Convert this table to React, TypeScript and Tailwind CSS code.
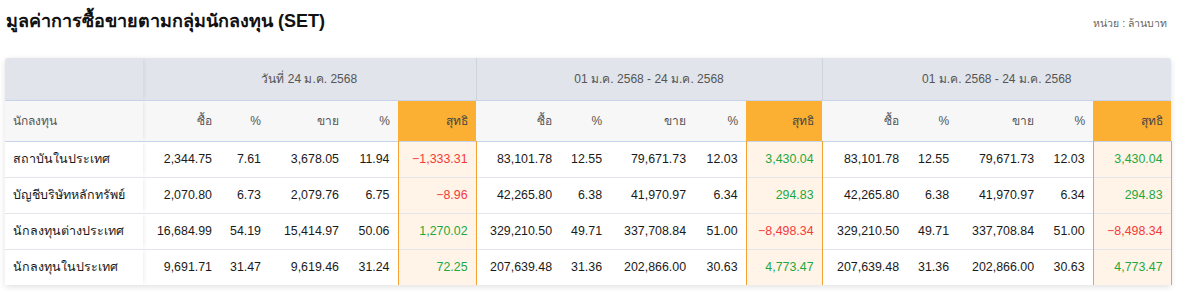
import React from "react";

type Row = {
  name: string;
  d: [string, string, string, string, string];
  m: [string, string, string, string, string];
  y: [string, string, string, string, string];
};

const rows: Row[] = [
  {
    name: "สถาบันในประเทศ",
    d: ["2,344.75", "7.61", "3,678.05", "11.94", "-1,333.31"],
    m: ["83,101.78", "12.55", "79,671.73", "12.03", "3,430.04"],
    y: ["83,101.78", "12.55", "79,671.73", "12.03", "3,430.04"],
  },
  {
    name: "บัญชีบริษัทหลักทรัพย์",
    d: ["2,070.80", "6.73", "2,079.76", "6.75", "-8.96"],
    m: ["42,265.80", "6.38", "41,970.97", "6.34", "294.83"],
    y: ["42,265.80", "6.38", "41,970.97", "6.34", "294.83"],
  },
  {
    name: "นักลงทุนต่างประเทศ",
    d: ["16,684.99", "54.19", "15,414.97", "50.06", "1,270.02"],
    m: ["329,210.50", "49.71", "337,708.84", "51.00", "-8,498.34"],
    y: ["329,210.50", "49.71", "337,708.84", "51.00", "-8,498.34"],
  },
  {
    name: "นักลงทุนในประเทศ",
    d: ["9,691.71", "31.47", "9,619.46", "31.24", "72.25"],
    m: ["207,639.48", "31.36", "202,866.00", "30.63", "4,773.47"],
    y: ["207,639.48", "31.36", "202,866.00", "30.63", "4,773.47"],
  },
];

const groups = [
  { label: "วันที่ 24 ม.ค. 2568", key: "d" as const, widths: ["w-[77px]", "w-[49px]", "w-[78px]", "w-[51px]", "w-[78px]"] },
  { label: "01 ม.ค. 2568 - 24 ม.ค. 2568", key: "m" as const, widths: ["w-[84px]", "w-[50px]", "w-[84px]", "w-[52px]", "w-[76px]"] },
  { label: "01 ม.ค. 2568 - 24 ม.ค. 2568", key: "y" as const, widths: ["w-[85px]", "w-[50px]", "w-[85px]", "w-[51px]", "w-[78px]"] },
];

const subHeads = ["ซื้อ", "%", "ขาย", "%"];

function NetCell({ value }: { value: string }) {
  const neg = value.startsWith("-");
  return (
    <td
      className={`border-x border-[#f5a132] bg-[#fff4e7] px-2 text-right ${
        neg ? "text-[#f23a3a]" : "text-[#1fa83f]"
      }`}
    >
      {neg ? "\u2212" + value.slice(1) : value}
    </td>
  );
}

export default function App() {
  return (
    <div
      className="min-h-screen bg-white px-[5px] pt-[9px]"
      style={{ fontFamily: '"Liberation Sans", "Noto Sans", sans-serif' }}
    >
      <div className="flex items-end justify-between pr-[5px]">
        <h1 className="text-[18px] font-bold text-[#111] leading-[24px] pl-[1px]">
          มูลค่าการซื้อขายตามกลุ่มนักลงทุน (SET)
        </h1>
        <span className="text-[10.5px] text-[#666] mb-[1px]">หน่วย : ล้านบาท</span>
      </div>

      <div className="mt-[25px] w-[1166px] rounded-t-[3px] shadow-[0_2px_6px_rgba(0,0,0,0.12)]">
        <table className="w-full table-fixed border-collapse text-[12.4px]">
          <colgroup>
            <col className="w-[138px]" />
            {groups.map((g) =>
              g.widths.map((w, i) => <col key={g.key + i} className={w} />)
            )}
          </colgroup>
          <thead className="text-[12px]">
            <tr className="h-[42px] bg-[#e1e4ea] text-[#555]">
              <th className="shadow-[3px_0_4px_-2px_rgba(0,0,0,0.08)] rounded-tl-[3px]"></th>
              {groups.map((g, i) => (
                <th
                  key={g.key}
                  colSpan={5}
                  className={`font-normal text-center ${
                    i > 0 ? "border-l border-[#cfd4dc]" : ""
                  } ${i === 2 ? "rounded-tr-[3px]" : ""}`}
                >
                  {g.label}
                </th>
              ))}
            </tr>
            <tr className="h-[41px] border-t border-[#c6d3ea] bg-[#f7f7f7] text-[#555]">
              <th className="px-2 text-left font-normal shadow-[3px_0_4px_-2px_rgba(0,0,0,0.08)]">
                นักลงทุน
              </th>
              {groups.map((g) => (
                <React.Fragment key={g.key}>
                  {subHeads.map((s, i) => (
                    <th key={i} className="px-2 text-right font-normal">
                      {s}
                    </th>
                  ))}
                  <th className="bg-[#fbb034] px-2 text-right font-normal text-[#444]">
                    สุทธิ
                  </th>
                </React.Fragment>
              ))}
            </tr>
          </thead>
          <tbody className="text-[#1a1a1a]">
            {rows.map((r, ri) => (
              <tr
                key={r.name}
                className={`${ri === 0 ? "h-[36px] border-t border-[#c6d3ea]" : "h-[36px] border-t border-[#e3e5ea]"}`}
              >
                <td className="px-2 text-left text-[12.5px] whitespace-nowrap shadow-[3px_0_4px_-2px_rgba(0,0,0,0.08)]">
                  {r.name}
                </td>
                {groups.map((g) => {
                  const v = r[g.key];
                  return (
                    <React.Fragment key={g.key}>
                      {v.slice(0, 4).map((x, i) => (
                        <td key={i} className="px-2 text-right">
                          {x}
                        </td>
                      ))}
                      <NetCell value={v[4]} />
                    </React.Fragment>
                  );
                })}
              </tr>
            ))}
          </tbody>
        </table>
      </div>
    </div>
  );
}
